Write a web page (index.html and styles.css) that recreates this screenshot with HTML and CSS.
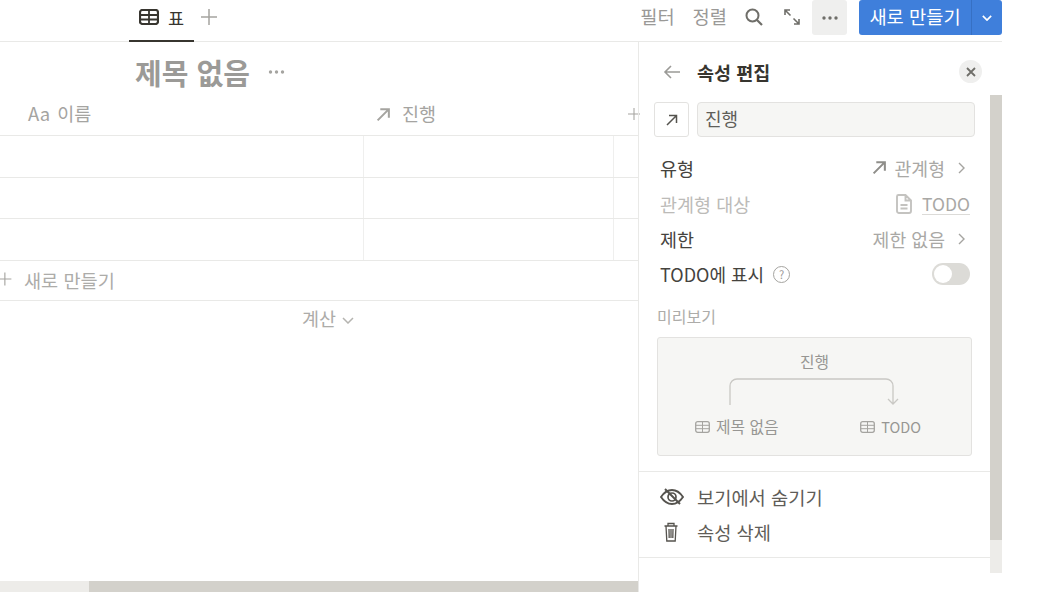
FILE: index.html
```html
<!DOCTYPE html>
<html lang="ko">

<head>
    <meta charset="utf-8">
    <meta name="viewport" content="width=device-width, initial-scale=1.0">
    <title>제목 없음</title>
    <link rel="stylesheet" href="styles.css">
</head>

<body>
    <div class="page">
        <header class="topbar">
            <div class="tabs">
                <div class="tab">
                    <svg class="ico-table" viewBox="0 0 20 16"><rect x="1" y="1" width="18" height="14" rx="2.5" fill="none" stroke="#37352f" stroke-width="2.2"/><path d="M1 6h18M1 10.500h18M10 1v14" stroke="#37352f" stroke-width="1.8" fill="none"/></svg>
                    <span>표</span>
                </div>
                <svg class="tab-add" viewBox="0 0 16 16"><path d="M8 0v16M0 8h16" stroke="#a5a4a0" stroke-width="1.5"/></svg>
            </div>
            <div class="actions">
                <span class="action">필터</span>
                <span class="action">정렬</span>
                <svg class="ico-search" viewBox="0 0 18 18"><circle cx="7.5" cy="7.5" r="6" fill="none" stroke="#6f6e69" stroke-width="2"/><path d="M12 12l5 5" stroke="#6f6e69" stroke-width="2.2"/></svg>
                <svg class="ico-expand" viewBox="0 0 16 16"><path d="M1 6V1h5M1 1l5.5 5.5M15 10v5h-5M15 15L9.5 9.5" fill="none" stroke="#6f6e69" stroke-width="1.6"/></svg>
                <div class="more">
                    <svg viewBox="0 0 16 4"><circle cx="2" cy="2" r="1.7" fill="#6f6e69"/><circle cx="8" cy="2" r="1.7" fill="#6f6e69"/><circle cx="14" cy="2" r="1.7" fill="#6f6e69"/></svg>
                </div>
                <div class="new-btn">
                    <span class="new-label">새로 만들기</span>
                    <span class="new-arrow"><svg viewBox="0 0 12 7"><path d="M1 1l5 5 5-5" fill="none" stroke="#fff" stroke-width="2"/></svg></span>
                </div>
            </div>
        </header>

        <div class="content">
            <main class="main">
                <div class="title-row">
                    <h1>제목 없음</h1>
                    <svg viewBox="0 0 16 4"><circle cx="2" cy="2" r="1.7" fill="#a5a4a0"/><circle cx="8" cy="2" r="1.7" fill="#a5a4a0"/><circle cx="14" cy="2" r="1.7" fill="#a5a4a0"/></svg>
                </div>

                <div class="table-head">
                    <div class="col-name"><span class="aa">Aa</span> 이름</div>
                    <div class="col-prog">
                        <svg viewBox="0 0 14 14"><path d="M1.5 12.5L12 2M4 2h8v8" fill="none" stroke="#a5a4a0" stroke-width="1.9"/></svg>
                        진행
                    </div>
                    <div class="col-add"><svg viewBox="0 0 16 16"><path d="M8 0v16M0 8h16" stroke="#a5a4a0" stroke-width="1.4"/></svg></div>
                </div>
                <div class="table-row"><div></div><div></div><div></div></div>
                <div class="table-row short"><div></div><div></div><div></div></div>
                <div class="table-row"><div></div><div></div><div></div></div>
                <div class="new-row">
                    <svg viewBox="0 0 16 16"><path d="M6 0v16M-2 8h16" stroke="#a5a4a0" stroke-width="1.4"/></svg>
                    새로 만들기
                </div>
                <div class="calc">계산 <svg viewBox="0 0 12 7"><path d="M1 1l5 5 5-5" fill="none" stroke="#b5b4b0" stroke-width="1.5"/></svg></div>

                <div class="hscroll"><div class="hscroll-track"></div><div class="hscroll-thumb"></div></div>
            </main>

            <aside class="panel">
                <div class="panel-head">
                    <svg class="ico-back" viewBox="0 0 18 14"><path d="M17 7H2M8 1L2 7l6 6" fill="none" stroke="#9b9a97" stroke-width="1.6"/></svg>
                    <h2>속성 편집</h2>
                    <span class="close"><svg viewBox="0 0 10 10"><path d="M1 1l8 8M9 1L1 9" stroke="#6f6e69" stroke-width="1.8"/></svg></span>
                </div>

                <div class="panel-body">
                    <div class="panel-scroll">
                        <div class="name-row">
                            <span class="icon-box"><svg viewBox="0 0 12 12"><path d="M1 11L10.5 1.5M3 1.5h7.5V9" fill="none" stroke="#55534e" stroke-width="1.5"/></svg></span>
                            <div class="name-input">진행</div>
                        </div>

                        <div class="prop prop-first">
                            <span>유형</span>
                            <span class="val">
                                <svg class="ico-rel" viewBox="0 0 14 14"><path d="M1.5 12.5L12 2M4 2h8v8" fill="none" stroke="#8f8e8a" stroke-width="1.9"/></svg>
                                관계형
                                <svg class="chev" viewBox="0 0 7 12"><path d="M1 1l5 5-5 5" fill="none" stroke="#a5a4a0" stroke-width="1.4"/></svg>
                            </span>
                        </div>
                        <div class="prop off">
                            <span>관계형 대상</span>
                            <span class="val">
                                <svg class="ico-page" viewBox="0 0 16 20"><path d="M2.5 1h7L15 6.5V17a2 2 0 0 1-2 2H3a2 2 0 0 1-2-2V2.500A1.500 1.500 0 0 1 2.500 1zM9.500 1v5.500H15M4.500 11h7M4.500 14.500h7" fill="none" stroke="#c4c3c0" stroke-width="1.900"/></svg>
                                <span class="todo-link">TODO</span>
                            </span>
                        </div>
                        <div class="prop">
                            <span>제한</span>
                            <span class="val">
                                제한 없음
                                <svg class="chev" viewBox="0 0 7 12"><path d="M1 1l5 5-5 5" fill="none" stroke="#a5a4a0" stroke-width="1.4"/></svg>
                            </span>
                        </div>
                        <div class="prop">
                            <span class="show-in">TODO에 표시 <span class="help">?</span></span>
                            <span class="toggle"><span class="knob"></span></span>
                        </div>

                        <div class="preview-label">미리보기</div>
                        <div class="preview">
                            <div class="preview-name">진행</div>
                            <svg class="connector" viewBox="0 0 170 27"><path d="M1 27V8a7 7 0 0 1 7-7h149a7 7 0 0 1 7 7v18M159 21l5 5 5-5" fill="none" stroke="#c9c8c4" stroke-width="1.300"/></svg>
                            <div class="preview-dbs">
                                <span class="db"><svg viewBox="0 0 15 12"><rect x=".7" y=".7" width="13.600" height="10.600" rx="2" fill="none" stroke="#a5a4a0" stroke-width="1.300"/><path d="M.7 4.300h13.600M.7 7.700h13.600M7.500 .7v10.600" stroke="#a5a4a0" fill="none"/></svg>제목 없음</span>
                                <span class="db db-todo"><svg viewBox="0 0 15 12"><rect x=".7" y=".7" width="13.600" height="10.600" rx="2" fill="none" stroke="#a5a4a0" stroke-width="1.300"/><path d="M.7 4.300h13.600M.7 7.700h13.600M7.500 .7v10.600" stroke="#a5a4a0" fill="none"/></svg>TODO</span>
                            </div>
                        </div>

                        <div class="menu">
                            <div class="menu-item">
                                <svg viewBox="0 0 24 18"><path d="M1 9c3-4.500 6.500-7 11-7s8 2.500 11 7c-3 4.500-6.500 7-11 7s-8-2.500-11-7z" fill="none" stroke="#55534e" stroke-width="1.900"/><circle cx="12" cy="9" r="4" fill="none" stroke="#55534e" stroke-width="1.700"/><path d="M5 1l15 15" stroke="#55534e" stroke-width="1.900"/></svg>
                                보기에서 숨기기
                            </div>
                            <div class="menu-item">
                                <svg class="ico-trash" viewBox="0 0 24 20"><path d="M4.500 4h13M8 4V1.500h6V4M6 4l.8 15h8.400l.8-15M9 7l.2 9M11 7v9M13 7l-.2 9" fill="none" stroke="#55534e" stroke-width="1.300"/></svg>
                                속성 삭제
                            </div>
                        </div>
                    </div>
                    <div class="vscroll"><div class="vscroll-thumb"></div><div class="vscroll-track"></div></div>
                </div>
            </aside>
        </div>
    </div>
</body>

</html>
```

FILE: styles.css
```css
* {
    margin: 0;
    padding: 0;
    box-sizing: border-box;
}

html,
body {
    height: 100%;
    overflow: hidden;
    background: white;
}

body {
    font-family: "Noto Sans CJK KR", "Noto Sans", sans-serif;
    font-size: 16px;
    color: #37352f;
}

svg {
    display: block;
    flex: none;
}

.page {
    width: 1002px;
    height: 592px;
    display: flex;
    flex-direction: column;
}

/* Top bar */
.topbar {
    height: 42px;
    flex: none;
    display: flex;
    justify-content: space-between;
    border-bottom: 1px solid #e9e9e7;
}

.tabs {
    display: flex;
    align-items: flex-start;
    padding-left: 129px;
}

.tab {
    width: 65px;
    height: 42px;
    padding: 9px 0 0 10px;
    display: flex;
    gap: 9px;
    font-size: 17.500px;
    line-height: 17px;
    border-bottom: 2px solid #37352f;
}

.ico-table {
    width: 20px;
    height: 16px;
}

.tab-add {
    width: 16px;
    height: 16px;
    margin: 9px 0 0 7px;
}

.actions {
    display: flex;
    align-items: flex-start;
}

.action {
    font-size: 18.700px;
    line-height: 32px;
    color: #9a9997;
    margin-right: 18px;
}

.ico-search {
    width: 18px;
    height: 18px;
    margin: 8px 21px 0 0;
}

.ico-expand {
    width: 16px;
    height: 16px;
    margin: 9px 12px 0 0;
}

.more {
    width: 35px;
    height: 35px;
    background: #efefee;
    border-radius: 3px;
    display: flex;
    align-items: center;
    justify-content: center;
    margin-right: 12px;
}

.more svg {
    width: 16px;
    height: 4px;
}

.new-btn {
    width: 143px;
    height: 35px;
    background: #3f7fdb;
    border-radius: 3px;
    display: flex;
    color: white;
}

.new-label {
    width: 113px;
    text-align: center;
    font-size: 18.700px;
    line-height: 32px;
    border-right: 1px solid #3670c4;
}

.new-arrow {
    flex: 1;
    display: flex;
    align-items: center;
    justify-content: center;
}

.new-arrow svg {
    width: 10px;
    height: 6px;
}

/* Main area */
.content {
    flex: 1;
    display: flex;
    min-height: 0;
}

.main {
    width: 638px;
    flex: none;
    display: flex;
    flex-direction: column;
}

.title-row {
    height: 53px;
    padding: 7px 0 0 135px;
    display: flex;
    align-items: center;
    gap: 18px;
    color: #9b9a97;
}

.title-row h1 {
    font-size: 29px;
    line-height: 40px;
    font-weight: 700;
}

.title-row svg {
    width: 17px;
    height: 4px;
}

.table-head {
    height: 41px;
    display: grid;
    grid-template-columns: 364px 250px 24px;
    border-bottom: 1px solid #e9e9e7;
    color: #a5a4a1;
    font-size: 18.500px;
    line-height: 36px;
}

.col-name {
    padding-left: 28px;
}

.aa {
    margin-right: 2px;
}

.col-prog {
    padding-left: 12px;
    display: flex;
    align-items: flex-start;
    gap: 11px;
}

.col-prog svg {
    width: 15px;
    height: 15px;
    margin-top: 12px;
}

.col-add svg {
    width: 12px;
    height: 14px;
    margin: 12px 0 0 14px;
}

.table-row {
    height: 42px;
    display: grid;
    grid-template-columns: 364px 250px 24px;
    border-bottom: 1px solid #e9e9e7;
}

.table-row.short {
    height: 41px;
}

.table-row div {
    border-right: 1px solid #efefee;
}

.table-row div:last-child {
    border-right: none;
}

.new-row {
    height: 40px;
    padding-bottom: 3px;
    display: flex;
    align-items: center;
    gap: 11px;
    border-bottom: 1px solid #e9e9e7;
    color: #adaca9;
    font-size: 18.600px;
}

.new-row svg {
    width: 13px;
    height: 16px;
}

.calc {
    height: 35px;
    padding-left: 302px;
    padding-bottom: 2px;
    display: flex;
    align-items: center;
    gap: 6px;
    color: #adaca9;
    font-size: 18.500px;
}

.calc svg {
    width: 12px;
    height: 7px;
    margin-top: 6px;
}

.hscroll {
    margin-top: auto;
    height: 11px;
    display: flex;
}

.hscroll-track {
    width: 89px;
    background: #edece9;
}

.hscroll-thumb {
    flex: 1;
    background: #d3d1cb;
}

/* Side panel */
.panel {
    flex: 1;
    display: flex;
    flex-direction: column;
    border-left: 1px solid #e9e9e7;
}

.panel-head {
    height: 53px;
    flex: none;
    display: flex;
    align-items: center;
    padding: 14px 20px 8px 24px;
}

.ico-back {
    width: 18px;
    height: 14px;
    margin-right: 16px;
}

.panel-head h2 {
    font-size: 18.500px;
    font-weight: 700;
    flex: 1;
}

.close {
    width: 23px;
    height: 23px;
    border-radius: 50%;
    background: #efefee;
    display: flex;
    align-items: center;
    justify-content: center;
}

.close svg {
    width: 10px;
    height: 10px;
}

.panel-body {
    height: 478px;
    flex: none;
    display: flex;
}

.panel-scroll {
    flex: 1;
    min-width: 0;
}

.vscroll {
    width: 12px;
    flex: none;
    display: flex;
    flex-direction: column;
}

.vscroll-thumb {
    flex: 1;
    background: #d3d1cb;
}

.vscroll-track {
    height: 33px;
    background: #edece9;
}

.name-row {
    display: flex;
    gap: 8px;
    padding: 7px 15px 0;
}

.icon-box {
    width: 35px;
    height: 35px;
    border: 1px solid #e3e2e0;
    border-radius: 3px;
    display: flex;
    align-items: center;
    justify-content: center;
}

.icon-box svg {
    width: 12px;
    height: 12px;
}

.name-input {
    flex: 1;
    height: 35px;
    background: #f6f6f4;
    border: 1px solid #e3e2e0;
    border-radius: 4px;
    padding-left: 7px;
    font-size: 18px;
    line-height: 31px;
    color: #605e59;
}

.prop {
    height: 35.500px;
    padding: 0 20px 0 21px;
    display: flex;
    align-items: center;
    justify-content: space-between;
    font-size: 18.500px;
    color: #45433e;
}

.prop-first {
    margin-top: 13px;
}

.prop.off {
    color: #bcbbb8;
    padding-top: 2px;
}

.val {
    display: flex;
    align-items: center;
    gap: 8px;
    font-size: 18.300px;
    color: #a9a8a5;
}

.chev {
    width: 7px;
    height: 12px;
    margin: 0 5px 0 5px;
}

.ico-rel {
    width: 15px;
    height: 15px;
}

.ico-page {
    width: 16px;
    height: 20px;
    margin-right: 2px;
}

.todo-link {
    border-bottom: 1px solid #dcdbd8;
    font-size: 17.500px;
    line-height: 20px;
    color: #a9a8a5;
}

.show-in {
    display: flex;
    align-items: center;
    gap: 9px;
    font-size: 18px;
}

.help {
    width: 17px;
    height: 17px;
    border: 1.500px solid #a5a4a0;
    border-radius: 50%;
    font-size: 11px;
    line-height: 14px;
    text-align: center;
    color: #9b9a97;
}

.toggle {
    width: 38px;
    height: 22px;
    padding: 2px;
    border-radius: 11px;
    background: #dcdbd7;
}

.knob {
    display: block;
    width: 18px;
    height: 18px;
    border-radius: 50%;
    background: white;
}

.preview-label {
    margin: 14px 0 0 18px;
    font-size: 16px;
    line-height: 20px;
    color: #adaca9;
}

.preview {
    width: 315px;
    height: 119px;
    margin: 11px 0 0 18px;
    background: #f6f6f4;
    border: 1px solid #e3e2e0;
    border-radius: 3px;
    padding-top: 14px;
    display: flex;
    flex-direction: column;
    align-items: center;
    font-size: 15.800px;
    color: #979693;
}

.preview-name {
    line-height: 20px;
}

.connector {
    width: 170px;
    height: 27px;
    margin-top: 6px;
    margin-left: -2px;
}

.preview-dbs {
    align-self: stretch;
    margin-top: 12px;
    padding: 0 50px 0 37px;
    display: flex;
    justify-content: space-between;
    line-height: 20px;
}

.db {
    display: flex;
    align-items: center;
    gap: 6px;
}

.db svg {
    width: 15px;
    height: 12px;
}

.db-todo {
    font-size: 14.500px;
}

.menu {
    margin-top: 15px;
    padding: 7px 0 8px;
    border-top: 1px solid #e9e9e7;
    border-bottom: 1px solid #e9e9e7;
}

.menu-item {
    height: 35px;
    padding-left: 21px;
    display: flex;
    align-items: center;
    gap: 13px;
    font-size: 18.700px;
    color: #5f5d58;
}

.menu-item svg {
    width: 24px;
    height: 18px;
}

.menu-item .ico-trash {
    height: 20px;
}
```
